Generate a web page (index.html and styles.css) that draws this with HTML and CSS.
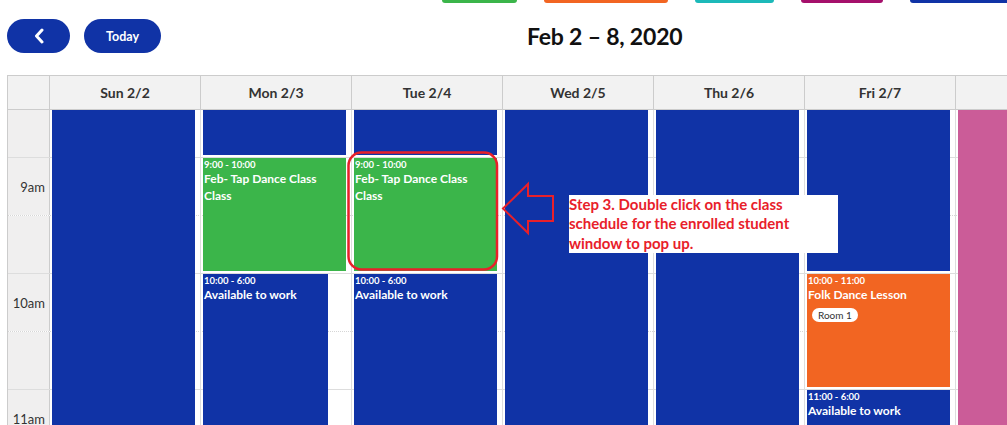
FILE: index.html
```html
<!DOCTYPE html>
<html lang="en">
<head>
<meta charset="utf-8">
<title>Calendar week</title>
<link rel="stylesheet" href="styles.css">
</head>
<body>
<div class="page">
  <div class="legend">
    <span class="lg lg-green"></span>
    <span class="lg lg-orange"></span>
    <span class="lg lg-teal"></span>
    <span class="lg lg-magenta"></span>
    <span class="lg lg-blue"></span>
  </div>

  <div class="toolbar">
    <button class="btn btn-prev" aria-label="Previous">
      <svg width="12" height="16" viewBox="0 0 12 16"><path d="M9 2 L3.5 8 L9 14" fill="none" stroke="#fff" stroke-width="3" stroke-linecap="round" stroke-linejoin="round"/></svg>
    </button>
    <button class="btn btn-today">Today</button>
    <h2 class="title">Feb 2 – 8, 2020</h2>
  </div>

  <div class="calendar">
    <div class="cal-head">
      <div class="hd-axis"></div>
      <div class="hd">Sun 2/2</div>
      <div class="hd">Mon 2/3</div>
      <div class="hd">Tue 2/4</div>
      <div class="hd">Wed 2/5</div>
      <div class="hd">Thu 2/6</div>
      <div class="hd">Fri 2/7</div>
      <div class="hd"></div>
    </div>
    <div class="cal-body">
      <div class="slots">
        <div class="slot slot-top"><div class="slot-label"></div><div class="slot-lane"></div></div>
        <div class="slot"><div class="slot-label">9am</div><div class="slot-lane"></div></div>
        <div class="slot half"><div class="slot-label"></div><div class="slot-lane"></div></div>
        <div class="slot"><div class="slot-label">10am</div><div class="slot-lane"></div></div>
        <div class="slot half"><div class="slot-label"></div><div class="slot-lane"></div></div>
        <div class="slot"><div class="slot-label">11am</div><div class="slot-lane"></div></div>
        <div class="slot half"><div class="slot-label"></div><div class="slot-lane"></div></div>
      </div>
      <div class="columns">
        <div class="col-axis"></div>
        <div class="day">
          <div class="ev blue" style="top:-60px;height:600px"></div>
        </div>
        <div class="day">
          <div class="ev blue" style="top:-60px;height:105px"></div>
          <div class="ev green" style="top:48px;height:113px">
            <div class="ev-time">9:00 - 10:00</div>
            <div class="ev-title">Feb- Tap Dance Class<br>Class</div>
          </div>
          <div class="ev blue ev-narrow" style="top:164px;height:400px">
            <div class="ev-time">10:00 - 6:00</div>
            <div class="ev-title">Available to work</div>
          </div>
        </div>
        <div class="day">
          <div class="ev blue" style="top:-60px;height:105px"></div>
          <div class="ev green" style="top:48px;height:113px">
            <div class="ev-time">9:00 - 10:00</div>
            <div class="ev-title">Feb- Tap Dance Class<br>Class</div>
          </div>
          <div class="ev blue" style="top:164px;height:400px">
            <div class="ev-time">10:00 - 6:00</div>
            <div class="ev-title">Available to work</div>
          </div>
        </div>
        <div class="day">
          <div class="ev blue" style="top:-60px;height:600px"></div>
        </div>
        <div class="day">
          <div class="ev blue" style="top:-60px;height:600px"></div>
        </div>
        <div class="day">
          <div class="ev blue" style="top:-60px;height:221px"></div>
          <div class="ev orange" style="top:164px;height:113px">
            <div class="ev-time">10:00 - 11:00</div>
            <div class="ev-title">Folk Dance Lesson</div>
            <span class="badge">Room 1</span>
          </div>
          <div class="ev blue" style="top:280px;height:300px">
            <div class="ev-time">11:00 - 6:00</div>
            <div class="ev-title">Available to work</div>
          </div>
        </div>
        <div class="day">
          <div class="ev pink" style="top:-60px;height:600px"></div>
        </div>
      </div>
    </div>
  </div>

  <svg class="markup" width="1007" height="425" viewBox="0 0 1007 425">
    <rect x="348.5" y="152.5" width="148.5" height="117" rx="13" ry="13" fill="none" stroke="#e8202a" stroke-width="2.5"/>
    <polygon points="503,208.5 528,184 528,196 553,196 553,221 528,221 528,233" fill="none" stroke="#e8202a" stroke-width="2"/>
  </svg>
  <div class="note">Step 3. Double click on the class schedule for the enrolled student window to pop up.</div>
</div>
</body>
</html>
```

FILE: styles.css
```css
html, body {
  margin: 0;
  padding: 0;
  background: #fff;
  overflow: hidden;
}

body {
  font-family: Lato, "Open Sans", "Liberation Sans", sans-serif;
  color: #333;
}

.page {
  position: relative;
  width: 1007px;
  height: 425px;
  overflow: hidden;
}

/* top legend buttons (cut off) */
.legend {
  display: flex;
  gap: 27px;
  padding-left: 442px;
  height: 3px;
}
.lg {
  height: 3px;
  border-radius: 0 0 3px 3px;
  flex: none;
}
.lg-green { width: 75px; background: #3bb54a; }
.lg-orange { width: 124px; background: #f26522; }
.lg-teal { width: 79px; background: #1cb9b9; }
.lg-magenta { width: 82px; background: #a5106b; }
.lg-blue { width: 110px; background: #1033a6; }

/* toolbar */
.toolbar {
  display: flex;
  align-items: center;
  margin-top: 16px;
  padding-left: 7px;
  height: 34px;
}
.btn {
  height: 34px;
  border: 0;
  border-radius: 17px;
  background: #1033a6;
  color: #fff;
  display: flex;
  align-items: center;
  justify-content: center;
  font-family: Lato, "Open Sans", sans-serif;
  font-weight: 700;
  font-size: 12.5px;
  padding: 0;
}
.btn-prev { width: 63px; }
.btn-today { width: 77px; margin-left: 14px; }
.title {
  margin: 0 0 0 366px;
  font-size: 23px;
  font-weight: 700;
  color: #111;
  line-height: 34px;
  letter-spacing: -0.2px;
}

/* calendar */
.calendar {
  margin-top: 22px;
  margin-left: 7px;
  border-left: 1px solid #ccc;
  border-top: 1px solid #ccc;
  width: max-content;
}
.cal-head {
  display: grid;
  grid-template-columns: 42px repeat(7, 151px);
  background: #f2f2f2;
}
.cal-head > div {
  height: 34px;
  box-sizing: border-box;
  border-right: 1px solid #ccc;
  border-bottom: 1px solid #ccc;
  display: flex;
  align-items: center;
  justify-content: center;
  font-weight: 700;
  font-size: 14px;
  color: #333;
}

.cal-body {
  position: relative;
  height: 330px;
  overflow: hidden;
}
.slot {
  display: grid;
  grid-template-columns: 42px 1fr;
  height: 58px;
  box-sizing: border-box;
  border-top: 1px solid #ddd;
}
.slot.half { border-top: 1px dotted #d6d6d6; }
.slot.slot-top { height: 47px; border-top: 0; }
.slot-label {
  background: #f0efef;
  border-right: 1px solid #ccc;
  box-sizing: border-box;
  font-size: 13px;
  color: #333;
  display: flex;
  align-items: center;
  justify-content: flex-end;
  padding-right: 4px;
}

.columns {
  position: absolute;
  top: 0;
  left: 0;
  bottom: 0;
  display: grid;
  grid-template-columns: 42px repeat(7, 151px);
}
.day {
  position: relative;
  border-right: 1px solid #ddd;
  box-sizing: border-box;
}

.ev {
  position: absolute;
  left: 2px;
  right: 5px;
  color: #fff;
  padding: 1px 1px 0;
  box-sizing: border-box;
  overflow: hidden;
}
.ev-narrow { right: 23px; }
.blue { background: #1033a6; }
.green { background: #3bb54a; }
.orange { background: #f26522; }
.pink { background: #cb5c98; }

.ev-time {
  font-size: 9.5px;
  font-weight: 700;
  line-height: 11px;
}
.ev-title {
  font-size: 12px;
  font-weight: 700;
  line-height: 17px;
}
.badge {
  display: inline-block;
  margin: 4px 0 0 4px;
  padding: 0 6px;
  height: 14px;
  line-height: 14px;
  border-radius: 7px;
  background: #fff;
  color: #333;
  font-size: 10px;
}

/* annotation */
.markup {
  position: absolute;
  top: 0;
  left: 0;
  pointer-events: none;
}
.note {
  position: absolute;
  left: 569px;
  top: 195px;
  width: 269px;
  height: 58px;
  box-sizing: border-box;
  background: #fff;
  color: #e8202a;
  font-weight: 700;
  font-size: 15px;
  line-height: 19.3px;
  padding-right: 30px;
}
```
